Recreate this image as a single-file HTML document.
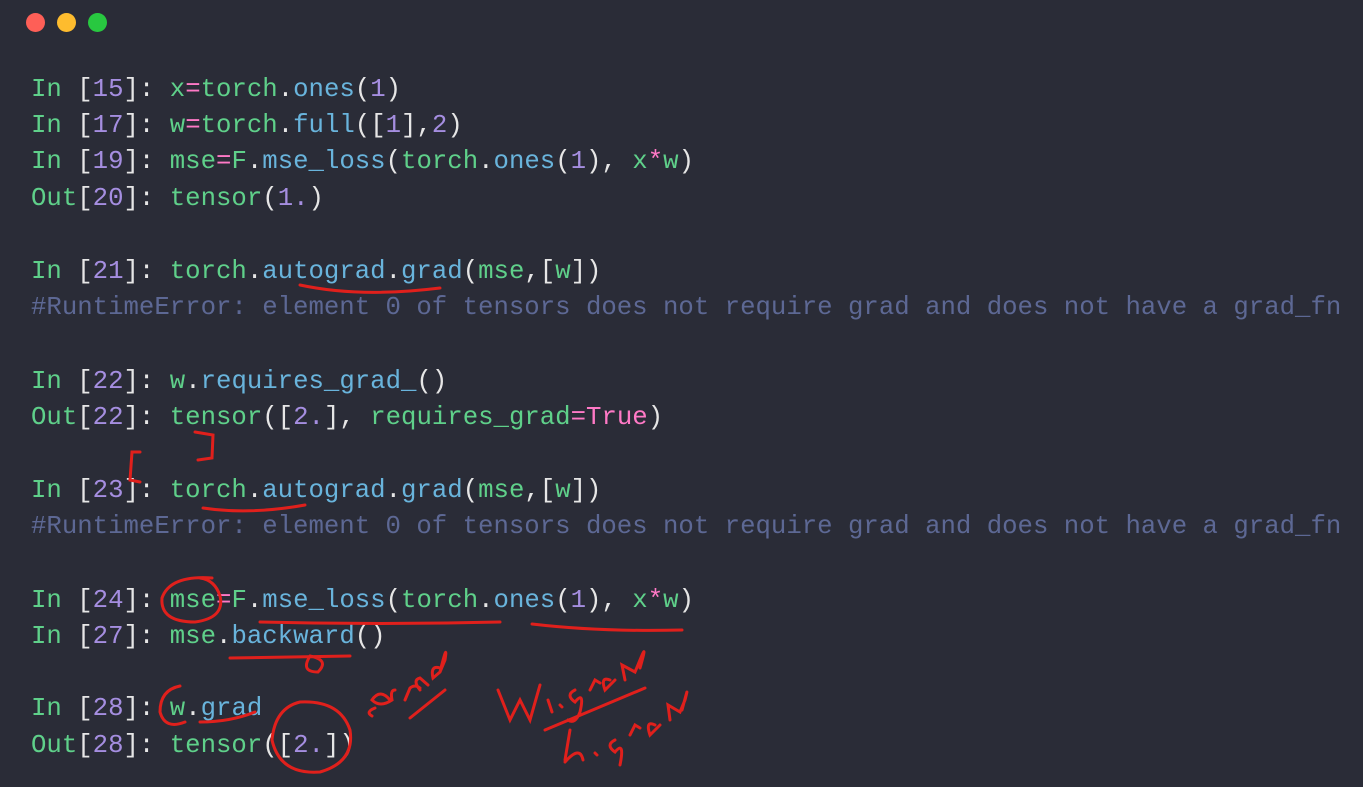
<!DOCTYPE html>
<html><head><style>
body{margin:0;width:1363px;height:787px;background:#2a2c37;overflow:hidden;position:relative;font-family:"Liberation Mono",monospace;}
.l{position:absolute;left:31px;font-size:25.7px;line-height:30px;white-space:pre;color:#e6e6e6;}
.g{color:#5fd08a}.b{color:#69b4dc}.p{color:#a58ee0}.k{color:#ff79c6}.c{color:#5d6894}
.dot{position:absolute;top:13px;width:19px;height:19px;border-radius:50%}
</style></head><body>
<div class="dot" style="left:26px;background:#fe5f57"></div>
<div class="dot" style="left:57px;background:#febc2e"></div>
<div class="dot" style="left:88px;background:#28c840"></div>
<div class="l" style="top:75px"><span class="g">In </span>[<span class="p">15</span>]: <span class="g">x</span><span class="k">=</span><span class="g">torch</span>.<span class="b">ones</span>(<span class="p">1</span>)</div>
<div class="l" style="top:111px"><span class="g">In </span>[<span class="p">17</span>]: <span class="g">w</span><span class="k">=</span><span class="g">torch</span>.<span class="b">full</span>([<span class="p">1</span>],<span class="p">2</span>)</div>
<div class="l" style="top:147px"><span class="g">In </span>[<span class="p">19</span>]: <span class="g">mse</span><span class="k">=</span><span class="g">F</span>.<span class="b">mse_loss</span>(<span class="g">torch</span>.<span class="b">ones</span>(<span class="p">1</span>), <span class="g">x</span><span class="k">*</span><span class="g">w</span>)</div>
<div class="l" style="top:184px"><span class="g">Out</span>[<span class="p">20</span>]: <span class="g">tensor</span>(<span class="p">1.</span>)</div>
<div class="l" style="top:257px"><span class="g">In </span>[<span class="p">21</span>]: <span class="g">torch</span>.<span class="b">autograd</span>.<span class="b">grad</span>(<span class="g">mse</span>,[<span class="g">w</span>])</div>
<div class="l c" style="top:293px">#RuntimeError: element 0 of tensors does not require grad and does not have a grad_fn</div>
<div class="l" style="top:367px"><span class="g">In </span>[<span class="p">22</span>]: <span class="g">w</span>.<span class="b">requires_grad_</span>()</div>
<div class="l" style="top:403px"><span class="g">Out</span>[<span class="p">22</span>]: <span class="g">tensor</span>([<span class="p">2.</span>], <span class="g">requires_grad</span><span class="k">=True</span>)</div>
<div class="l" style="top:476px"><span class="g">In </span>[<span class="p">23</span>]: <span class="g">torch</span>.<span class="b">autograd</span>.<span class="b">grad</span>(<span class="g">mse</span>,[<span class="g">w</span>])</div>
<div class="l c" style="top:512px">#RuntimeError: element 0 of tensors does not require grad and does not have a grad_fn</div>
<div class="l" style="top:586px"><span class="g">In </span>[<span class="p">24</span>]: <span class="g">mse</span><span class="k">=</span><span class="g">F</span>.<span class="b">mse_loss</span>(<span class="g">torch</span>.<span class="b">ones</span>(<span class="p">1</span>), <span class="g">x</span><span class="k">*</span><span class="g">w</span>)</div>
<div class="l" style="top:622px"><span class="g">In </span>[<span class="p">27</span>]: <span class="g">mse</span>.<span class="b">backward</span>()</div>
<div class="l" style="top:694px"><span class="g">In </span>[<span class="p">28</span>]: <span class="g">w</span>.<span class="b">grad</span></div>
<div class="l" style="top:731px"><span class="g">Out</span>[<span class="p">28</span>]: <span class="g">tensor</span>([<span class="p">2.</span>])</div>
<svg width="1363" height="787" style="position:absolute;left:0;top:0" fill="none" stroke="#e0201c" stroke-width="3" stroke-linecap="round">
<path d="M300 285 Q360 298 440 288"/>
<path d="M140 452 L132 452 L130 480 L140 482 M195 432 L213 435 L212 458 L198 460"/>
<path d="M203 508 Q250 515 305 505"/>
<path d="M212 578 Q170 575 162 598 Q160 622 195 622 Q225 618 220 596 Q215 580 200 578"/>
<path d="M260 622 Q380 625 500 622 M532 624 Q600 632 682 630"/>
<path d="M230 658 L350 656 M310 656 Q300 672 318 672 Q330 660 310 656"/>
<path d="M180 686 Q160 690 160 712 Q165 730 185 722"/>
<path d="M200 722 Q230 722 255 712"/>
<path d="M300 702 Q275 708 272 740 Q280 775 320 772 Q355 762 350 730 Q340 700 300 702"/>
<path d="M375 708 Q365 712 372 716 M390 700 Q380 688 372 700 Q380 708 392 700 Q390 690 395 690 M405 700 L410 688 Q415 684 420 688 M420 690 Q412 680 420 678 L428 685 M440 668 Q430 665 433 678 L440 672 L445 660 Q448 640 440 672 M410 718 L445 690"/>
<path d="M498 690 L510 720 L520 700 L530 720 L540 685 M548 700 L552 712 M560 705 L562 707 M575 690 Q565 695 575 702 Q585 690 580 712 Q575 725 568 720 M590 690 L595 680 L600 683 M610 680 Q600 676 605 690 L615 680 M625 680 L622 665 L635 672 L640 660 Q648 640 640 668 M545 730 L645 688"/>
<path d="M565 760 L570 730 M565 762 Q580 745 583 760 M595 753 L597 755 M615 740 Q605 745 615 752 Q625 740 620 765 M630 735 L635 725 L640 728 M655 725 Q645 720 650 735 L660 725 M670 720 L668 705 L680 712 L685 700 Q690 680 682 710"/>
</svg>
</body></html>
